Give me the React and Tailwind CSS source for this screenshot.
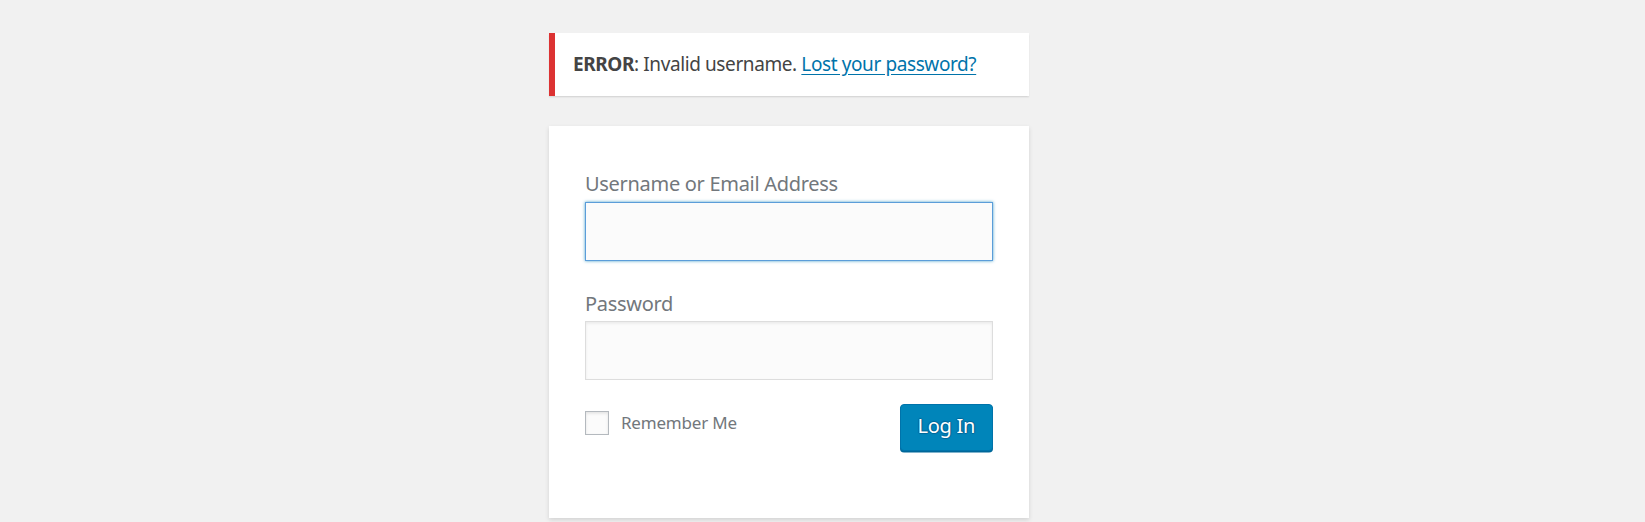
export default function App() {
    return (
        <div className="min-h-[522px] bg-[#f1f1f1] pt-[33px]" style={{ fontFamily: "'Noto Sans', 'Open Sans', sans-serif" }}>
            <div className="ml-[549px] w-[480px]">
                {/* Error notice */}
                <div className="flex h-[63px] items-center border-l-[6px] border-[#dc3232] bg-white pl-[18px] text-[19px] tracking-[-0.4px] whitespace-nowrap text-[#444] shadow-[0_1.5px_1.5px_0_rgba(0,0,0,0.1)]">
                    <p>
                        <strong className="font-bold">ERROR</strong>: Invalid username.{' '}
                        <a href="#" className="text-[#0073aa] underline underline-offset-[3px]">Lost your password?</a>
                    </p>
                </div>

                {/* Login form */}
                <form className="mt-[30px] bg-white px-[36px] pt-[42px] pb-[67px] shadow-[0_1.5px_4.5px_rgba(0,0,0,0.13)]">
                    <label className="block text-[20px] leading-[31px] tracking-[-0.3px] text-[#72777c]">Username or Email Address</label>
                    <input
                        type="text"
                        className="mt-[3px] block h-[59px] w-[408px] border border-[#5b9dd9] bg-[#fbfbfb] px-[5px] text-[36px] shadow-[0_0_3px_rgba(30,140,190,0.8)] outline-none"
                    />

                    <label className="mt-[27px] block text-[20px] leading-[31px] tracking-[-0.3px] text-[#72777c]">Password</label>
                    <input
                        type="password"
                        className="mt-[2px] block h-[59px] w-[408px] border border-[#ddd] bg-[#fbfbfb] px-[5px] text-[36px] shadow-[inset_0_1.5px_3px_rgba(0,0,0,0.07)] outline-none"
                    />

                    <div className="mt-[24px] flex w-[408px] items-start justify-between">
                        <label className="mt-[6px] flex items-center gap-[12px] text-[17px] tracking-[-0.2px] text-[#72777c]">
                            <span className="block h-[24px] w-[24px] border border-[#b4b9be] bg-[#fbfbfb] shadow-[inset_0_1.5px_3px_rgba(0,0,0,0.1)]" />
                            Remember Me
                        </label>
                        <button
                            type="button"
                            className="h-[47px] rounded-[4px] border border-[#0073aa] bg-[#0085ba] px-[17px] pb-[3px] text-[20px] tracking-[-0.3px] text-white shadow-[0_1.5px_0_#006799] [text-shadow:0_-1px_1px_#006799,1px_0_1px_#006799,0_1px_1px_#006799,-1px_0_1px_#006799]"
                        >
                            Log In
                        </button>
                    </div>
                </form>
            </div>
        </div>
    );
}
